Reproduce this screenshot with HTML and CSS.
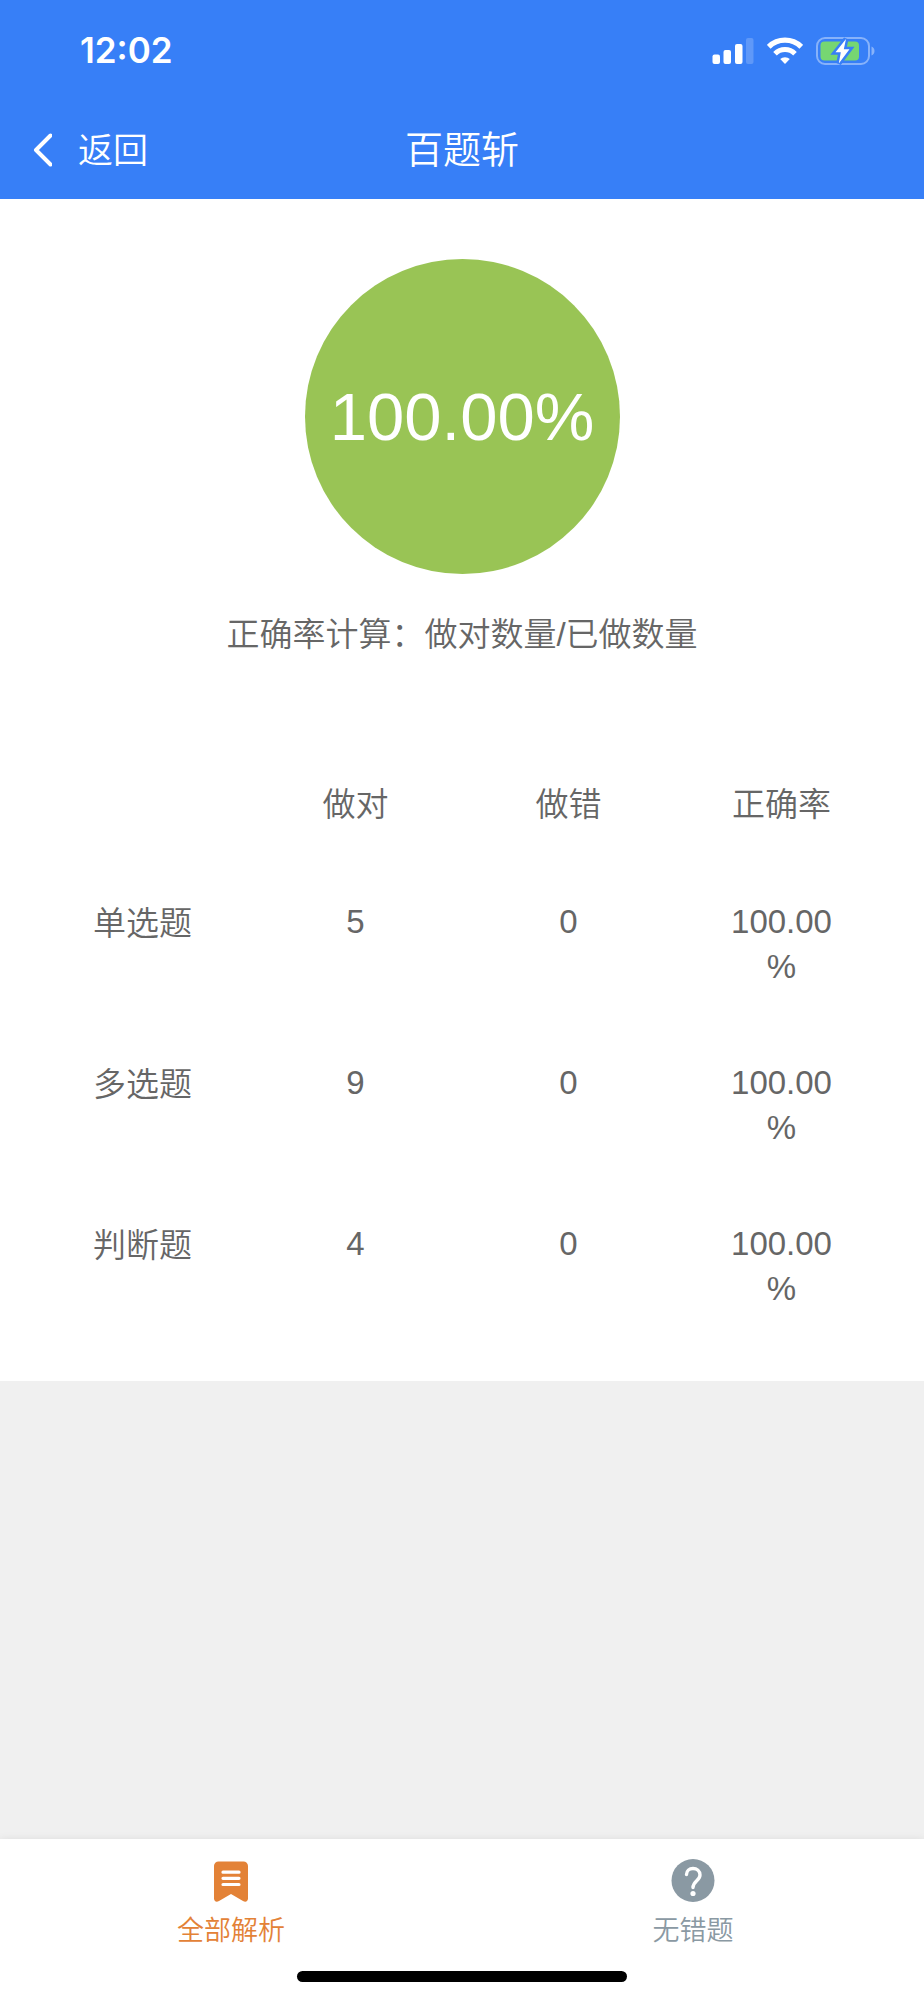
FILE: index.html
```html
<!DOCTYPE html>
<html lang="zh-CN">
<head>
<meta charset="utf-8">
<meta name="viewport" content="width=device-width, initial-scale=1">
<title>百题斩</title>
<link rel="stylesheet" href="styles.css">
</head>
<body>
<header class="header">
  <div class="status">
    <time class="status-time">12:02</time>
    <div class="status-icons">
      <svg width="42" height="28" viewBox="0 0 42 28" fill="#fff" aria-hidden="true">
        <rect x="0.5" y="17.5" width="7.5" height="9.5" rx="2"/>
        <rect x="11.5" y="13" width="7.5" height="14" rx="2"/>
        <rect x="23" y="7" width="7.5" height="20" rx="2"/>
        <rect x="34" y="1" width="7.5" height="26" rx="2" opacity=".2"/>
      </svg>
      <svg width="36" height="28" viewBox="0 0 36 28" fill="none" stroke="#fff" aria-hidden="true">
        <path d="M1.700 9.800a23.300 23.300 0 0 1 32.600 0" stroke-width="5.4"/>
        <path d="M8 16.700a14 14 0 0 1 20 0" stroke-width="5"/>
        <path d="M18 27l-4.800-4.900a6.900 6.900 0 0 1 9.600 0z" fill="#fff" stroke="none"/>
      </svg>
      <svg width="60" height="28" viewBox="0 0 60 28" aria-hidden="true">
        <rect x="1" y="1" width="52" height="26" rx="8" fill="none" stroke="#fff" stroke-opacity=".4" stroke-width="2"/>
        <rect x="4.500" y="4.500" width="38.500" height="19" rx="4" fill="#76d672"/>
        <path d="M55.500 9.500c4 1.500 4 7.500 0 9z" fill="#fff" fill-opacity=".4"/>
        <path d="M30 2L19.500 15.200h5.300L22.800 26.500 33.500 12.300h-5.700z" fill="#fff" stroke="#377ff7" stroke-width="5"/>
        <path d="M30 2L19.500 15.200h5.300L22.800 26.500 33.500 12.300h-5.700z" fill="#fff"/>
      </svg>
    </div>
  </div>
  <div class="navbar">
    <button class="back" type="button">
      <svg width="20" height="34" viewBox="0 0 20 34" fill="none" stroke="#fff" stroke-width="4" stroke-linecap="round" stroke-linejoin="round" aria-hidden="true"><path d="M18.500 2.500L4 17l14.500 14.500"/></svg>
      <span>返回</span>
    </button>
    <h1 class="title">百题斩</h1>
  </div>
</header>
<main class="result">
  <div class="score">100.00%</div>
  <p class="formula">正确率计算：做对数量/已做数量</p>
  <table class="stats">
    <thead>
      <tr><td></td><th scope="col">做对</th><th scope="col">做错</th><th scope="col">正确率</th></tr>
    </thead>
    <tbody>
      <tr><th scope="row">单选题</th><td>5</td><td>0</td><td>100.00<wbr>%</td></tr>
      <tr><th scope="row">多选题</th><td>9</td><td>0</td><td>100.00<wbr>%</td></tr>
      <tr><th scope="row">判断题</th><td>4</td><td>0</td><td>100.00<wbr>%</td></tr>
    </tbody>
  </table>
</main>
<footer class="tabbar">
  <nav class="tabs">
    <button class="tab tab-active" type="button">
      <svg width="44" height="44" viewBox="0 0 44 44" aria-hidden="true">
        <path d="M9.500 2.500h25a4.500 4.500 0 0 1 4.500 4.500v32.500c0 3-2.500 4-5 2.500L22 35 10 42c-2.500 1.500-5 .5-5-2.500V7a4.500 4.500 0 0 1 4.500-4.500z" fill="currentColor"/>
        <path d="M14 13.200h16M14 19.300h16M14 25.500h16" stroke="#fff" stroke-width="3.200" stroke-linecap="round"/>
      </svg>
      <span>全部解析</span>
    </button>
    <button class="tab" type="button">
      <svg width="44" height="44" viewBox="0 0 44 44" aria-hidden="true">
        <circle cx="22" cy="21.500" r="21.500" fill="currentColor"/>
        <path d="M15.500 15.500c0-3.500 2.700-6 6.500-6s7 2.500 7 6.500c0 5.500-7 6-7 12.500" fill="none" stroke="#fff" stroke-width="3.400" stroke-linecap="round"/>
        <circle cx="22" cy="34.500" r="2.600" fill="#fff"/>
      </svg>
      <span>无错题</span>
    </button>
  </nav>
  <div class="home-indicator"></div>
</footer>
</body>
</html>
```

FILE: styles.css
```css
* {
  box-sizing: border-box;
}

body {
  display: flex;
  flex-direction: column;
  min-height: 100vh;
  margin: 0;
  background: #f0f0f0;
  color: #666;
  font-family: "Liberation Sans", "Noto Sans CJK SC", sans-serif;
  font-size: 33px;
  font-weight: 350;
  line-height: 45px;
}

button {
  padding: 0;
  border: 0;
  background: none;
  color: inherit;
  font: inherit;
}

svg {
  display: block;
}

.header {
  background: #377ff7;
  color: #fff;
}

.status {
  display: flex;
  align-items: center;
  justify-content: space-between;
  height: 101px;
  padding: 0 48px 0 80px;
}

.status-time {
  font-family: Inter, sans-serif;
  font-size: 35px;
  font-weight: 600;
}

.status-icons {
  display: flex;
  gap: 13px;
}

.navbar {
  display: grid;
  grid-template-columns: 1fr auto 1fr;
  align-items: center;
  height: 98px;
  padding: 0 32px;
}

.back {
  display: flex;
  align-items: center;
  justify-self: start;
  gap: 26px;
  font-size: 35px;
}

.title {
  margin: 0;
  font-size: 38px;
  font-weight: 350;
}

.result {
  padding: 60px 36px 35px;
  background: #fff;
}

.score {
  display: flex;
  align-items: center;
  justify-content: center;
  width: 315px;
  height: 315px;
  margin: 0 auto;
  border-radius: 50%;
  background: #99c455;
  color: #fff;
  font-size: 67px;
}

.formula {
  margin: 38px 0 86px;
  text-align: center;
}

.stats {
  width: 100%;
  border-collapse: collapse;
  table-layout: fixed;
  text-align: center;
}

.stats th,
.stats td {
  padding: 36px 50px 35px;
  font-weight: 350;
  vertical-align: top;
}

.stats tbody th {
  padding-top: 38px;
}

.stats thead th {
  padding: 39px 50px 36px;
}

.tabbar {
  margin-top: auto;
  padding: 20px 0 18px;
  background: #fff;
  box-shadow: 0 0 8px rgba(0, 0, 0, 0.08);
}

.tabs {
  display: flex;
}

.tab {
  display: flex;
  flex: 1;
  flex-direction: column;
  align-items: center;
  gap: 8px;
  color: #8a99a3;
  font-size: 27px;
  line-height: 40px;
}

.tab-active {
  color: #e38237;
}

.home-indicator {
  width: 330px;
  height: 11px;
  margin: 20px auto 0;
  border-radius: 6px;
  background: #000;
}
```
